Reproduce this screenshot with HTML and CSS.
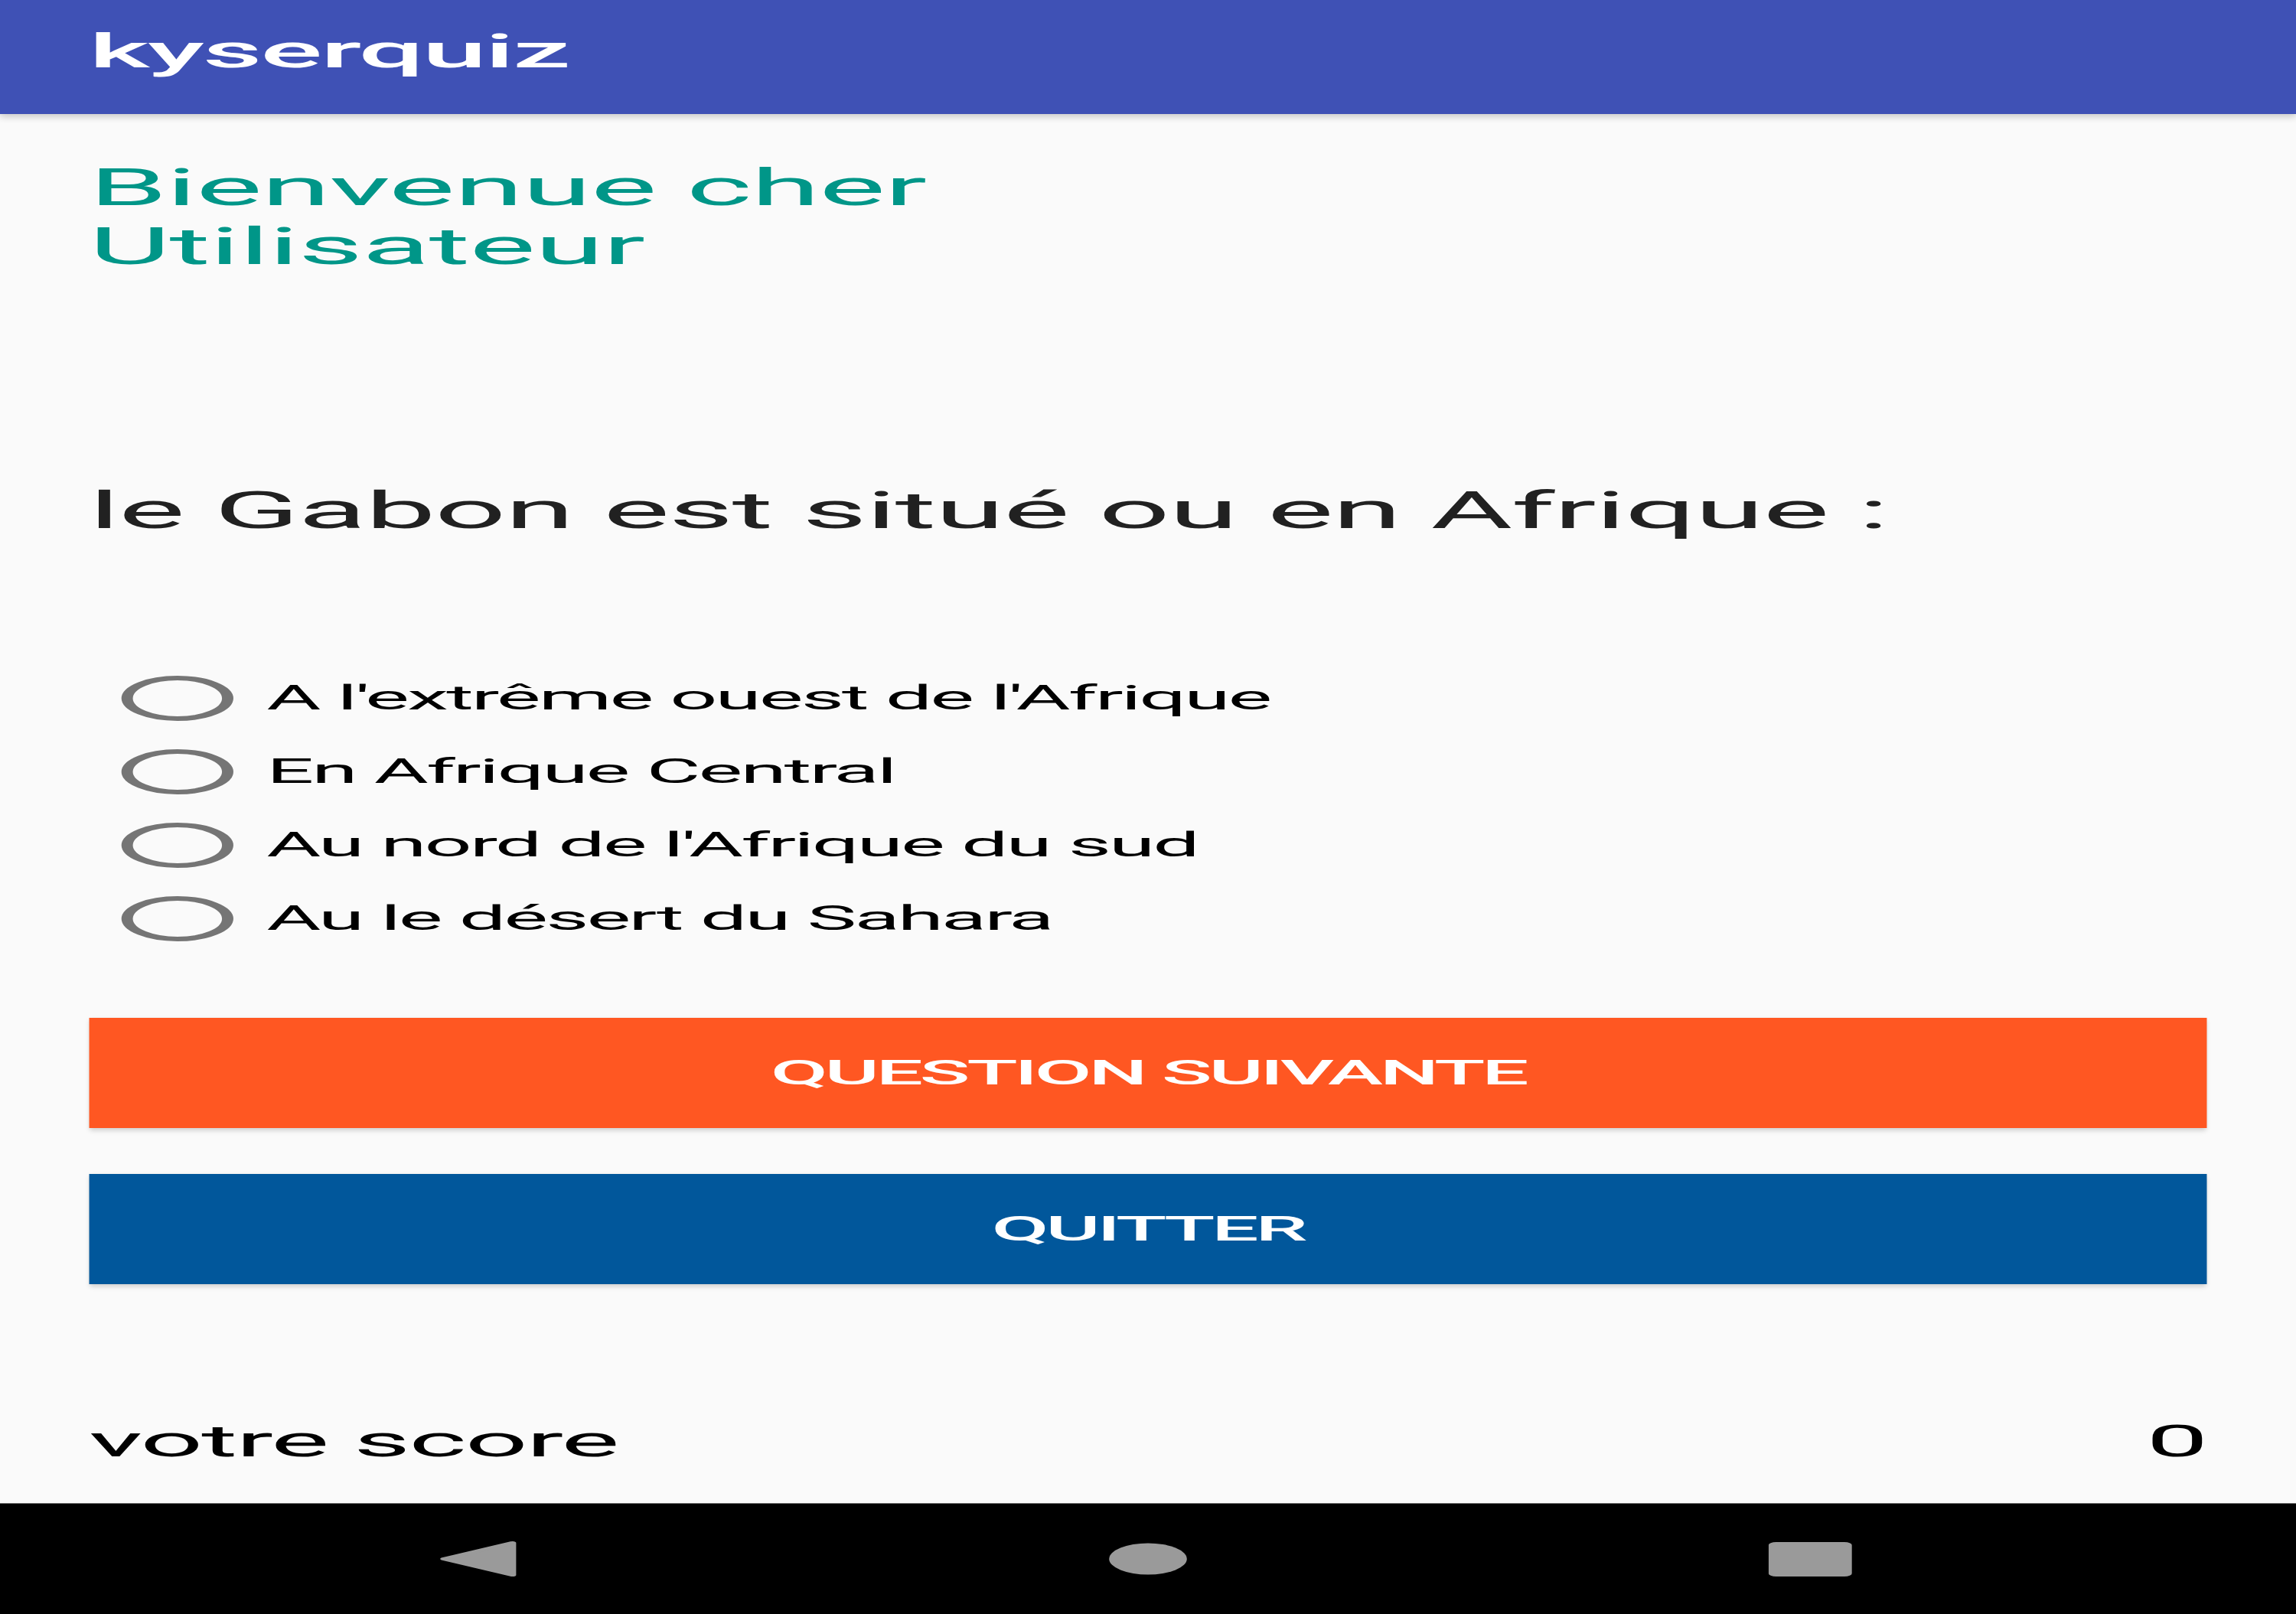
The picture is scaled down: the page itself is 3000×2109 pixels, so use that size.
FILE: index.html
```html
<!DOCTYPE html>
<html lang="fr">
<head>
<meta charset="utf-8">
<title>kyserquiz</title>
<link rel="stylesheet" href="styles.css">
</head>
<body>
<div class="device">
  <header class="appbar">
    <span class="appbar-title">kyserquiz</span>
  </header>
  <main class="content">
    <h1 class="welcome">Bienvenue cher<br>Utilisateur</h1>
    <p class="question">le Gabon est situé ou en Afrique :</p>
    <ul class="options">
      <li class="option"><span class="radio"></span><span class="option-label">A l'extrême ouest de l'Afrique</span></li>
      <li class="option"><span class="radio"></span><span class="option-label">En Afrique Central</span></li>
      <li class="option"><span class="radio"></span><span class="option-label">Au nord de l'Afrique du sud</span></li>
      <li class="option"><span class="radio"></span><span class="option-label">Au le désert du Sahara</span></li>
    </ul>
    <button class="btn btn-next" type="button">Question suivante</button>
    <button class="btn btn-quit" type="button">Quitter</button>
    <div class="score">
      <span class="score-label">votre score</span>
      <span class="score-value">0</span>
    </div>
  </main>
  <nav class="navbar">
    <span class="nav-item">
      <svg class="nav-back" width="42" height="48" viewBox="0 0 42 48"><path d="M3 24 L39 3 L39 45 Z" fill="#9a9a9a" stroke="#9a9a9a" stroke-width="4" stroke-linejoin="round"/></svg>
    </span>
    <span class="nav-item">
      <svg width="42" height="42" viewBox="0 0 42 42"><circle cx="21" cy="21" r="20.5" fill="#9a9a9a"/></svg>
    </span>
    <span class="nav-item">
      <svg class="nav-recents" width="44" height="45" viewBox="0 0 44 45"><rect x="0" y="0" width="44" height="45" rx="4" fill="#9a9a9a"/></svg>
    </span>
  </nav>
</div>
</body>
</html>
```

FILE: styles.css
```css
html, body {
  margin: 0;
  padding: 0;
  background: #fafafa;
  overflow: hidden;
}

.device {
  width: 1210px;
  height: 2109px;
  display: flex;
  flex-direction: column;
  background: #fafafa;
  font-family: Roboto, "Noto Sans", sans-serif;
  transform: scaleX(2.479339);
  transform-origin: 0 0;
}

.appbar {
  height: 149px;
  box-sizing: border-box;
  padding: 32px 47px 0;
  background: #3f51b5;
  box-shadow: 0 3px 6px rgba(0, 0, 0, 0.22);
  position: relative;
  z-index: 1;
  flex-shrink: 0;
}

.appbar-title {
  color: #ffffff;
  font-size: 61px;
  font-weight: 500;
  line-height: 71px;
  letter-spacing: -0.95px;
}

.content {
  flex: 1;
  padding: 0 47px;
  display: flex;
  flex-direction: column;
}

.welcome {
  margin: 58px 0 0;
  color: #009688;
  font-size: 66px;
  font-weight: 400;
  line-height: 77px;
  letter-spacing: -0.47px;
}

.question {
  margin: 268px 0 0;
  color: #212121;
  font-size: 66px;
  line-height: 77px;
  letter-spacing: -0.54px;
}

.options {
  list-style: none;
  margin: 158px 0 0;
  padding: 0 0 0 17px;
}

.option {
  height: 96px;
  display: flex;
  align-items: center;
  gap: 17.5px;
}

.radio {
  width: 59px;
  height: 59px;
  box-sizing: border-box;
  border: 6px solid #757575;
  border-radius: 50%;
  flex-shrink: 0;
}

.option-label {
  color: #000000;
  font-size: 44px;
  line-height: 52px;
  letter-spacing: -1.2px;
}

.btn {
  height: 144px;
  border: 0;
  width: 100%;
  padding: 0;
  color: #ffffff;
  font-family: Roboto, "Noto Sans", sans-serif;
  font-size: 44px;
  font-weight: 500;
  letter-spacing: -1.8px;
  text-transform: uppercase;
  box-shadow: 0 3px 4px rgba(0, 0, 0, 0.18);
  flex-shrink: 0;
}

.btn-next {
  margin-top: 82px;
  background: #ff5722;
}

.btn-quit {
  margin-top: 60px;
  background: #01579b;
}

.score {
  margin-top: 171px;
  display: flex;
  justify-content: space-between;
  color: #000000;
  font-size: 58px;
  line-height: 68px;
  letter-spacing: -0.77px;
}

.navbar {
  height: 145px;
  box-sizing: border-box;
  border-top: 1px solid #6a6a6a;
  background: #000000;
  display: flex;
  justify-content: center;
  align-items: center;
  gap: 150px;
  flex-shrink: 0;
}

.nav-item {
  width: 200px;
  display: flex;
  justify-content: center;
  align-items: center;
}

.nav-item svg {
  display: block;
}

.nav-back {
  margin-left: -6px;
}

.nav-recents {
  margin-left: -3px;
}
```
